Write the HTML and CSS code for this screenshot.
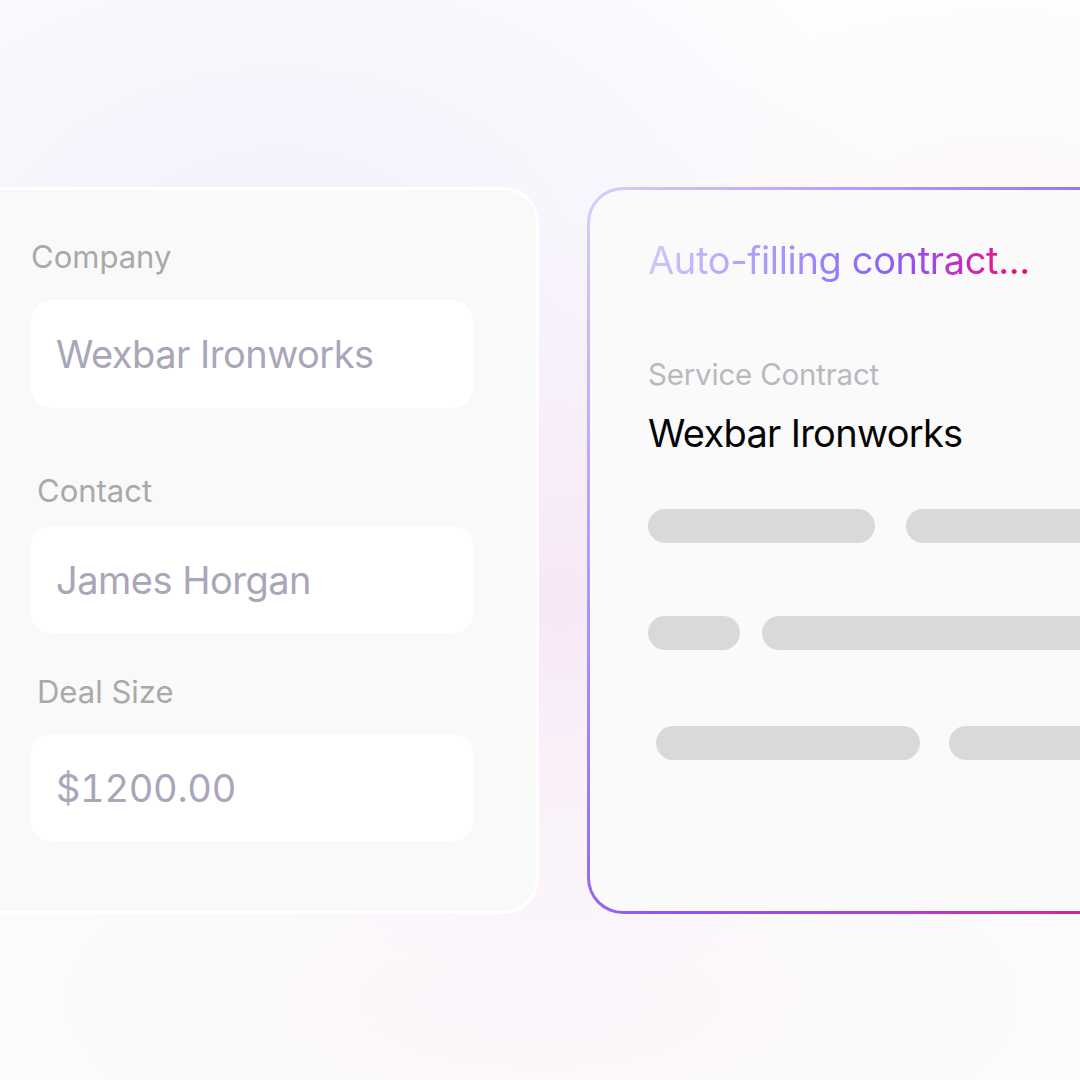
FILE: index.html
```html
<!DOCTYPE html>
<html lang="en">
<head>
<meta charset="utf-8">
<title>Auto-filling contract</title>
<link rel="stylesheet" href="styles.css">
</head>
<body>
<main class="stage">
  <section class="card form-card">
    <div class="field">
      <div class="label">Company</div>
      <div class="input">Wexbar Ironworks</div>
    </div>
    <div class="field field-contact">
      <div class="label label-indent">Contact</div>
      <div class="input">James Horgan</div>
    </div>
    <div class="field field-deal">
      <div class="label label-indent">Deal Size</div>
      <div class="input input-number">$1200.00</div>
    </div>
  </section>

  <section class="card contract-card">
    <h2 class="status">Auto-filling contract...</h2>
    <p class="doc-type">Service Contract</p>
    <p class="doc-name">Wexbar Ironworks</p>
    <div class="skeleton">
      <div class="sk-row">
        <span class="bar w227"></span>
        <span class="bar w300"></span>
      </div>
      <div class="sk-row sk-row-2">
        <span class="bar w92"></span>
        <span class="bar w400"></span>
      </div>
      <div class="sk-row sk-row-3">
        <span class="bar w264"></span>
        <span class="bar w300"></span>
      </div>
    </div>
  </section>
</main>
</body>
</html>
```

FILE: styles.css
```css
* { box-sizing: border-box; }

html, body {
  margin: 0;
  padding: 0;
  width: 1080px;
  height: 1080px;
  overflow: hidden;
}

body {
  font-family: Inter, "Noto Sans", "Liberation Sans", sans-serif;
  background-color: #fdfcfe;
  background-image:
    radial-gradient(ellipse 420px 380px at 560px 600px, rgba(246, 228, 245, 0.85), rgba(246, 228, 245, 0) 100%),
    radial-gradient(ellipse 620px 420px at 280px 260px, rgba(243, 239, 252, 0.95), rgba(243, 239, 252, 0) 100%),
    radial-gradient(ellipse 380px 220px at 1000px 230px, rgba(253, 246, 244, 0.6), rgba(253, 246, 244, 0) 100%),
    radial-gradient(ellipse 700px 260px at 540px 1000px, rgba(250, 245, 250, 0.9), rgba(250, 245, 250, 0) 100%);
}

.stage {
  display: flex;
  align-items: flex-start;
  gap: 48px;
  padding-top: 187px;
  margin-left: -40px;
  width: 1200px;
}

.card {
  flex: none;
  height: 727px;
  border-radius: 36px;
  border: 3px solid transparent;
}

/* Left form card */
.form-card {
  width: 579px;
  background: #f9f9f9;
  border-color: #ffffff;
  padding: 48px 63px 0 68px;
  display: flex;
  flex-direction: column;
}

.label {
  font-size: 31px;
  line-height: 37px;
  color: #a9a9a9;
}

.label-indent { padding-left: 6px; }

.input {
  margin-top: 25px;
  height: 108px;
  background: #ffffff;
  border-radius: 20px;
  display: flex;
  align-items: center;
  padding-left: 25px;
  font-size: 38px;
  color: #a9a6b9;
  letter-spacing: -0.5px;
}

.input-number {
  font-variant-numeric: tabular-nums;
  letter-spacing: -0.3px;
}

.field-contact { margin-top: 64px; }
.field-contact .input { margin-top: 17px; height: 107px; }
.field-deal { margin-top: 40px; }
.field-deal .input { margin-top: 24px; height: 107px; }

/* Right contract card */
.contract-card {
  width: 560px;
  padding: 47px 0 0 58px;
  background:
    linear-gradient(#fafafa, #fafafa) padding-box,
    linear-gradient(to bottom right, #d6cfff 0%, #b39cfa 25%, #9874f5 45%, #8e52ec 58%, #b63dd6 78%, #e3188e 100%) border-box;
}

.status {
  display: inline-block;
  margin: 0;
  font-size: 38px;
  line-height: 46px;
  font-weight: 400;
  letter-spacing: -0.35px;
  background: linear-gradient(90deg, #cfc7ff 0%, #b4a2fb 25%, #9c82f9 45%, #8b67f7 60%, #a245e0 74%, #c92bb9 84%, #e3188a 92%, #f20a66 100%);
  -webkit-background-clip: text;
  background-clip: text;
  color: transparent;
}

.doc-type {
  margin: 74px 0 0;
  font-size: 29.5px;
  line-height: 34px;
  color: #b9b9bd;
  letter-spacing: -0.2px;
}

.doc-name {
  margin: 19px 0 0;
  font-size: 38px;
  line-height: 46px;
  color: #050505;
  letter-spacing: -0.7px;
}

.skeleton {
  margin-top: 53px;
  display: flex;
  flex-direction: column;
}

.sk-row {
  display: flex;
  gap: 31px;
}

.sk-row-2 { margin-top: 73px; gap: 22px; }
.sk-row-3 { margin-top: 76px; padding-left: 8px; gap: 29px; }

.bar {
  display: block;
  flex: none;
  height: 34px;
  border-radius: 17px;
  background: #d9d9d9;
}

.w227 { width: 227px; }
.w92 { width: 92px; }
.w264 { width: 264px; }
.w300 { width: 300px; }
.w400 { width: 400px; }
```
